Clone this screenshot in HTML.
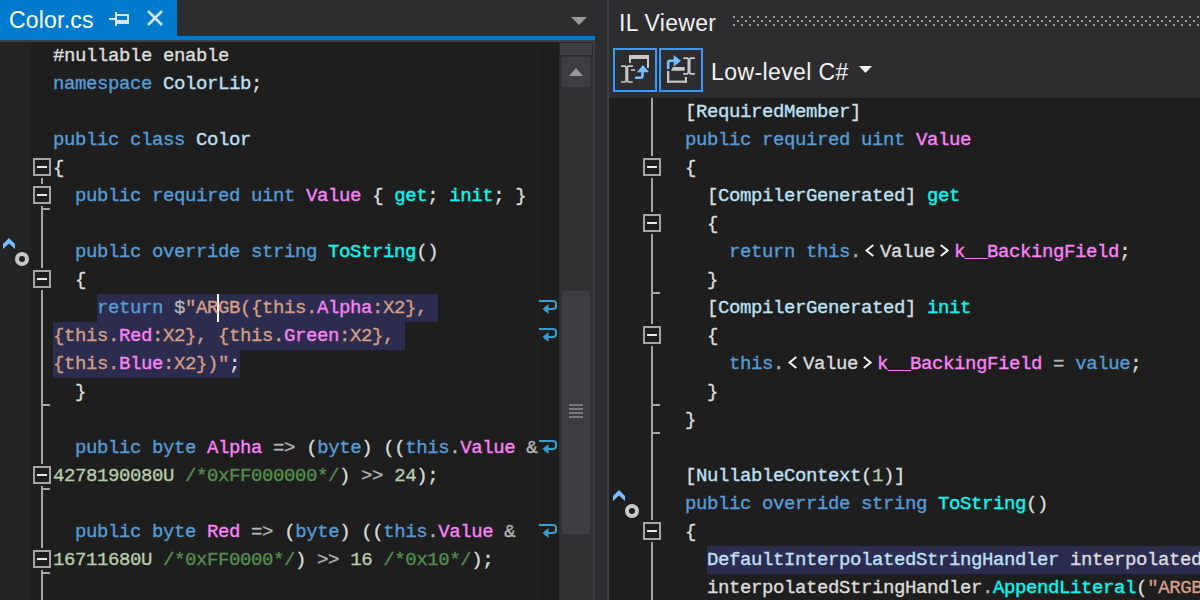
<!DOCTYPE html>
<html><head><meta charset="utf-8">
<style>
*{margin:0;padding:0;box-sizing:border-box}
html,body{width:1200px;height:600px;overflow:hidden;background:#2d2d30}
.a{position:absolute}
.ui{font-family:"Liberation Sans",sans-serif;font-size:23px;color:#f1f1f1;white-space:pre;letter-spacing:0.2px}
.ln{position:absolute;height:28px;line-height:29px;font-family:"Liberation Mono",monospace;font-size:19px;letter-spacing:-0.4px;-webkit-text-stroke:0.35px currentColor;white-space:pre;color:#dcdcdc}
.k{color:#569cd6}.t{color:#bde0f5}.p{color:#fa82f8}.c{color:#00fcf4}.s{color:#d69d85}.n{color:#b5cea8}.g{color:#52904a}.w{color:#dcdcdc}.o{color:#b4b4b4}
.box{position:absolute;width:18px;height:18px;border:2px solid #a5a5a5;background:#1e1e1e}
.box::after{content:"";position:absolute;left:2px;top:6px;width:10px;height:2px;background:#e8e8e8}
.vl{position:absolute;width:2px;background:#a5a5a5}
.tk{position:absolute;height:2px;width:9px;background:#a5a5a5}
.sel{position:absolute;background:#2c2c4e}
.ch{display:inline-block;width:19px;height:28px;vertical-align:top;position:relative}
</style></head><body>
<!-- tab strip -->
<div class="a" style="left:0;top:0;width:177px;height:36px;background:#007acc"></div>
<div class="a ui" style="left:9px;top:5px;line-height:30px;color:#fff">Color.cs</div>
<svg class="a" style="left:105px;top:8px" width="64" height="22" viewBox="0 0 64 22">
  <g fill="#d0e6f5">
    <rect x="4" y="10" width="6" height="2"/>
    <rect x="10" y="4" width="2" height="14"/>
    <rect x="12" y="6" width="12" height="2"/>
    <rect x="22" y="6" width="2" height="10"/>
    <rect x="12" y="12" width="12" height="4"/>
  </g>
  <path d="M43 3 L57 17 M57 3 L43 17" stroke="#d0e6f5" stroke-width="2.6" fill="none"/>
</svg>
<svg class="a" style="left:570px;top:16px" width="18" height="10"><path d="M1 1 H17 L9 9 Z" fill="#999"/></svg>
<div class="a" style="left:0;top:36px;width:595px;height:4px;background:#007acc"></div>
<div class="a" style="left:0;top:40px;width:595px;height:2px;background:#3f3f46"></div>
<!-- editor -->
<div class="a" style="left:0;top:42px;width:559px;height:558px;background:#1e1e1e"></div>
<div class="a" style="left:0;top:42px;width:31px;height:558px;background:#232323"></div>
<!-- scrollbar -->
<div class="a" style="left:559px;top:42px;width:34px;height:558px;background:#313134"></div>
<div class="a" style="left:538px;top:42px;width:1px;height:558px;background:#212120"></div>
<div class="a" style="left:593px;top:42px;width:2px;height:558px;background:#3f3f46"></div>
<div class="a" style="left:559px;top:42px;width:34px;height:14px;background:#3e3e42;border:1px solid #29292b"></div>
<div class="a" style="left:562px;top:57px;width:28px;height:30px;background:#3e3e42"></div>
<svg class="a" style="left:569px;top:68px" width="14" height="8"><path d="M0 8 L7 0 L14 8 Z" fill="#999"/></svg>
<div class="a" style="left:562px;top:291px;width:28px;height:243px;background:#3e3e42"></div>
<div class="a" style="left:569px;top:404px;width:14px;height:2px;background:#7a7a7a"></div>
<div class="a" style="left:569px;top:408px;width:14px;height:2px;background:#7a7a7a"></div>
<div class="a" style="left:569px;top:412px;width:14px;height:2px;background:#7a7a7a"></div>
<div class="a" style="left:569px;top:416px;width:14px;height:2px;background:#7a7a7a"></div>
<!-- splitter -->
<div class="a" style="left:607px;top:0;width:2px;height:600px;background:#3f3f46"></div>
<!-- left gutter outlining -->
<div class="box" style="left:33px;top:158px"></div>
<div class="vl" style="left:41px;top:178px;height:6px"></div>
<div class="box" style="left:33px;top:186px"></div>
<div class="vl" style="left:41px;top:206px;height:62px"></div>
<div class="tk" style="left:41px;top:208px"></div>
<div class="box" style="left:33px;top:270px"></div>
<div class="vl" style="left:41px;top:290px;height:174px"></div>
<div class="tk" style="left:41px;top:404px"></div>
<div class="box" style="left:33px;top:466px"></div>
<div class="vl" style="left:41px;top:486px;height:62px"></div>
<div class="tk" style="left:41px;top:488px"></div>
<div class="box" style="left:33px;top:550px"></div>
<div class="vl" style="left:41px;top:570px;height:30px"></div>
<div class="tk" style="left:41px;top:572px"></div>
<!-- override glyph left -->
<svg class="a" style="left:0;top:232px" width="32" height="40" viewBox="0 0 32 40">
  <path d="M3 12 L9 6 L15 12 L15 17 L9 11.5 L3 17 Z" fill="#75beff"/>
  <circle cx="22" cy="27" r="5" fill="none" stroke="#c8c8c8" stroke-width="4"/>
</svg>
<!-- selection -->
<div class="sel" style="left:97px;top:294px;width:341px;height:28px"></div>
<div class="sel" style="left:53px;top:322px;width:352px;height:28px"></div>
<div class="sel" style="left:53px;top:350px;width:187px;height:28px"></div>
<!-- caret -->
<div class="a" style="left:217px;top:294px;width:2px;height:28px;background:#fff"></div>
<!-- left code -->
<div class="ln" style="left:53px;top:42px">#nullable enable</div>
<div class="ln" style="left:53px;top:70px"><span class="k">namespace</span> <span class="t">ColorLib</span>;</div>
<div class="ln" style="left:53px;top:126px"><span class="k">public</span> <span class="k">class</span> <span class="t">Color</span></div>
<div class="ln" style="left:53px;top:154px">{</div>
<div class="ln" style="left:53px;top:182px">  <span class="k">public</span> <span class="k">required</span> <span class="k">uint</span> <span class="p">Value</span> { <span class="c">get</span>; <span class="c">init</span>; }</div>
<div class="ln" style="left:53px;top:238px">  <span class="k">public</span> <span class="k">override</span> <span class="k">string</span> <span class="c">ToString</span>()</div>
<div class="ln" style="left:53px;top:266px">  {</div>
<div class="ln" style="left:53px;top:294px">    <span class="k">return</span> <span class="o">$</span><span class="s">"ARGB({this.</span><span class="p">Alpha</span><span class="s">:X2},</span></div>
<div class="ln" style="left:53px;top:322px"><span class="s">{this.</span><span class="p">Red</span><span class="s">:X2}, {this.</span><span class="p">Green</span><span class="s">:X2},</span></div>
<div class="ln" style="left:53px;top:350px"><span class="s">{this.</span><span class="p">Blue</span><span class="s">:X2})"</span>;</div>
<div class="ln" style="left:53px;top:378px">  }</div>
<div class="ln" style="left:53px;top:434px">  <span class="k">public</span> <span class="k">byte</span> <span class="p">Alpha</span> <span class="o">=&gt;</span> (<span class="k">byte</span>) ((<span class="k">this</span><span class="o">.</span><span class="p">Value</span> <span class="o">&amp;</span></div>
<div class="ln" style="left:53px;top:462px"><span class="n">4278190080U</span> <span class="g">/*0xFF000000*/</span>) <span class="o">&gt;&gt;</span> <span class="n">24</span>);</div>
<div class="ln" style="left:53px;top:518px">  <span class="k">public</span> <span class="k">byte</span> <span class="p">Red</span> <span class="o">=&gt;</span> (<span class="k">byte</span>) ((<span class="k">this</span><span class="o">.</span><span class="p">Value</span> <span class="o">&amp;</span></div>
<div class="ln" style="left:53px;top:546px"><span class="n">16711680U</span> <span class="g">/*0xFF0000*/</span>) <span class="o">&gt;&gt;</span> <span class="n">16</span> <span class="g">/*0x10*/</span>);</div>
<!-- wrap glyphs -->
<svg class="a" style="left:538px;top:296px" width="22" height="22" viewBox="0 0 22 22"><path d="M1 5 H15 Q18 5 18 8 V10 Q18 13 15 13 H9" fill="none" stroke="#34a0cc" stroke-width="2"/><path d="M4.5 13 L10.5 8 V18 Z" fill="#34a0cc"/></svg>
<svg class="a" style="left:538px;top:324px" width="22" height="22" viewBox="0 0 22 22"><path d="M1 5 H15 Q18 5 18 8 V10 Q18 13 15 13 H9" fill="none" stroke="#34a0cc" stroke-width="2"/><path d="M4.5 13 L10.5 8 V18 Z" fill="#34a0cc"/></svg>
<svg class="a" style="left:538px;top:436px" width="22" height="22" viewBox="0 0 22 22"><path d="M1 5 H15 Q18 5 18 8 V10 Q18 13 15 13 H9" fill="none" stroke="#34a0cc" stroke-width="2"/><path d="M4.5 13 L10.5 8 V18 Z" fill="#34a0cc"/></svg>
<svg class="a" style="left:538px;top:520px" width="22" height="22" viewBox="0 0 22 22"><path d="M1 5 H15 Q18 5 18 8 V10 Q18 13 15 13 H9" fill="none" stroke="#34a0cc" stroke-width="2"/><path d="M4.5 13 L10.5 8 V18 Z" fill="#34a0cc"/></svg>
<!-- IL viewer header -->
<div class="a ui" style="left:619px;top:8px;line-height:30px;letter-spacing:0.3px">IL Viewer</div>
<svg class="a" style="left:733px;top:16px" width="467" height="10">
  <defs><pattern id="dots" width="8" height="8" patternUnits="userSpaceOnUse"><rect x="0" y="0" width="2" height="2" fill="#a0a0a0"/><rect x="4" y="4" width="2" height="2" fill="#a0a0a0"/></pattern></defs>
  <rect x="0" y="0" width="467" height="10" fill="url(#dots)"/>
</svg>
<!-- toolbar buttons -->
<div class="a" style="left:613px;top:48px;width:44px;height:44px;border:2px solid #3399ff"></div>
<div class="a" style="left:659px;top:48px;width:44px;height:44px;border:2px solid #3399ff"></div>
<svg class="a" style="left:613px;top:48px" width="44" height="44" viewBox="0 0 44 44">
  <g fill="#c8c8c8">
    <rect x="16" y="7" width="20" height="4"/><rect x="34" y="11" width="2" height="9"/><rect x="16" y="11" width="2" height="4"/>
    <path d="M8 17.3 H12 Q13.8 17.3 13.8 19 Q13.8 17.3 15.6 17.3 H19.8 V19 H16 Q15.3 19 15.3 20 V32.3 Q15.3 33.2 16 33.2 H19.8 V34.8 H15.6 Q13.8 34.8 13.8 33 Q13.8 34.8 12 34.8 H8 V33.2 H11.6 Q12.3 33.2 12.3 32.3 V20 Q12.3 19 11.6 19 H8 Z"/>
    <rect x="18" y="21.2" width="4" height="1.6"/>
  </g>
  <path d="M22 29.7 H27.3 Q29.5 29.7 29.5 27.5 V22" fill="none" stroke="#75beff" stroke-width="2.6"/>
  <path d="M23.8 24.2 L30 17 L36 24.2 L33 24.2 L30 21 L27 24.2 Z" fill="#75beff"/>
  <path d="M26.5 24.2 L30 20 L33.5 24.2 Z" fill="#75beff"/>
</svg>
<svg class="a" style="left:659px;top:48px" width="44" height="44" viewBox="0 0 44 44">
  <g fill="#c8c8c8">
    <rect x="8" y="23" width="2.3" height="11.8"/><rect x="8" y="32.6" width="20" height="2.2"/><rect x="25.8" y="29" width="2.2" height="5.8"/>
    <path d="M12 22.7 L14 19 H25.7 V22.7 Z"/>
    <path d="M24.2 9.2 H28.3 Q30 9.2 30 11 Q30 9.2 31.7 9.2 H35.9 V11 H32.2 Q31.5 11 31.5 12 V24 Q31.5 25.1 32.2 25.1 H35.9 V26.8 H31.7 Q30 26.8 30 25 Q30 26.8 28.3 26.8 H24.2 V25.1 H27.8 Q28.5 25.1 28.5 24 V12 Q28.5 11 27.8 11 H24.2 Z"/>
  </g>
  <path d="M9.2 21 V14.5 Q9.2 12.8 11 12.8 H17" fill="none" stroke="#75beff" stroke-width="2.6"/>
  <path d="M14.7 7 L22 12.8 L14.7 18.7 Z" fill="#75beff"/>
</svg>
<div class="a ui" style="left:711px;top:57px;line-height:30px;letter-spacing:0.4px">Low-level C#</div>
<svg class="a" style="left:859px;top:66px" width="13" height="8"><path d="M0 0 H13 L6.5 7 Z" fill="#f1f1f1"/></svg>
<!-- IL code area -->
<div class="a" style="left:609px;top:98px;width:591px;height:502px;background:#1e1e1e"></div>
<!-- IL gutter -->
<div class="vl" style="left:651px;top:98px;height:58px"></div>
<div class="box" style="left:643px;top:158px"></div>
<div class="vl" style="left:651px;top:178px;height:34px"></div>
<div class="box" style="left:643px;top:214px"></div>
<div class="vl" style="left:651px;top:234px;height:90px"></div>
<div class="tk" style="left:651px;top:292px"></div>
<div class="box" style="left:643px;top:326px"></div>
<div class="vl" style="left:651px;top:346px;height:174px"></div>
<div class="tk" style="left:651px;top:404px"></div>
<div class="tk" style="left:651px;top:432px"></div>
<div class="box" style="left:643px;top:522px"></div>
<div class="vl" style="left:651px;top:542px;height:58px"></div>
<svg class="a" style="left:610px;top:484px" width="32" height="40" viewBox="0 0 32 40">
  <path d="M3 12 L9 6 L15 12 L15 17 L9 11.5 L3 17 Z" fill="#75beff"/>
  <circle cx="22" cy="27" r="5" fill="none" stroke="#c8c8c8" stroke-width="4"/>
</svg>
<div class="sel" style="left:707px;top:546px;width:493px;height:28px"></div>
<!-- IL code -->
<div class="ln" style="left:685px;top:98px">[<span class="t">RequiredMember</span>]</div>
<div class="ln" style="left:685px;top:126px"><span class="k">public</span> <span class="k">required</span> <span class="k">uint</span> <span class="p">Value</span></div>
<div class="ln" style="left:685px;top:154px">{</div>
<div class="ln" style="left:685px;top:182px">  [<span class="t">CompilerGenerated</span>] <span class="c">get</span></div>
<div class="ln" style="left:685px;top:210px">  {</div>
<div class="ln" style="left:685px;top:238px">    <span class="k">return</span> <span class="k">this</span><span class="o">.</span><span class="ch"><svg width="19" height="28"><path d="M12.3 7 L5.5 12.5 L12.3 18" fill="none" stroke="#f4f4f4" stroke-width="2"/></svg></span>Value<span class="ch"><svg width="19" height="28"><path d="M5.8 7 L12.6 12.5 L5.8 18" fill="none" stroke="#f4f4f4" stroke-width="2"/></svg></span><span class="p">k__BackingField</span>;</div>
<div class="ln" style="left:685px;top:266px">  }</div>
<div class="ln" style="left:685px;top:294px">  [<span class="t">CompilerGenerated</span>] <span class="c">init</span></div>
<div class="ln" style="left:685px;top:322px">  {</div>
<div class="ln" style="left:685px;top:350px">    <span class="k">this</span><span class="o">.</span><span class="ch"><svg width="19" height="28"><path d="M12.3 7 L5.5 12.5 L12.3 18" fill="none" stroke="#f4f4f4" stroke-width="2"/></svg></span>Value<span class="ch"><svg width="19" height="28"><path d="M5.8 7 L12.6 12.5 L5.8 18" fill="none" stroke="#f4f4f4" stroke-width="2"/></svg></span><span class="p">k__BackingField</span> <span class="o">=</span> <span class="k">value</span>;</div>
<div class="ln" style="left:685px;top:378px">  }</div>
<div class="ln" style="left:685px;top:406px">}</div>
<div class="ln" style="left:685px;top:462px">[<span class="t">NullableContext</span>(<span class="n">1</span>)]</div>
<div class="ln" style="left:685px;top:490px"><span class="k">public</span> <span class="k">override</span> <span class="k">string</span> <span class="c">ToString</span>()</div>
<div class="ln" style="left:685px;top:518px">{</div>
<div class="ln" style="left:685px;top:546px">  <span class="t">DefaultInterpolatedStringHandler</span> interpolatedStringHandler</div>
<div class="ln" style="left:685px;top:574px">  interpolatedStringHandler<span class="o">.</span><span class="c">AppendLiteral</span>(<span class="s">"ARGB("</span>);</div>
</body></html>
